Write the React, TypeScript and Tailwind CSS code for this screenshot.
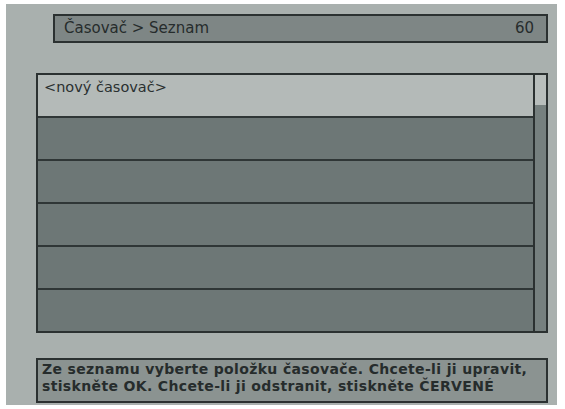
const rows = ['<nový časovač>', '', '', '', '', ''];

export default function App() {
  return (
    <div className="w-[565px] h-[409px] bg-white pt-[4px] pl-[6px] pr-[8px] pb-[4px]" style={{ fontFamily: '"DejaVu Sans", Verdana, sans-serif' }}>
      <div className="h-full bg-[#a9b0ae] pt-[10px] pl-[30px] pr-[9px] flex flex-col">
        {/* title bar */}
        <div className="ml-[17px] h-[29px] border-2 border-[#2b3131] bg-[#7e8685] flex items-center justify-between pl-[9px] pr-[12px] text-[15px] text-[#262c2c]">
          <span>Časovač &gt; Seznam</span>
          <span>60</span>
        </div>

        {/* list */}
        <div className="mt-[30px] h-[260px] border-2 border-[#2b3131] flex">
          <div className="flex-1 flex flex-col">
            {rows.map((r, i) => (
              <div
                key={i}
                className={`flex-1 flex items-start pl-[6px] pt-[2px] text-[14.5px] text-[#2a3030] ${i === 0 ? 'bg-[#b4bab8]' : 'bg-[#6d7776] border-t-2 border-[#2f3636]'}`}
              >
                {r}
              </div>
            ))}
          </div>
          <div className="w-[13px] border-l-2 border-[#2b3131] bg-[#76807f] flex flex-col">
            <div className="h-[30px] bg-[#b8bebc]" />
          </div>
        </div>

        {/* help box */}
        <div className="mt-[25px] h-[45px] border-2 border-[#2b3131] bg-[#8b9391] px-[4px] pt-[1px] text-[14px] font-bold leading-[17px] tracking-[0.35px] text-[#262c2c]">
          Ze seznamu vyberte položku časovače. Chcete-li ji upravit,
          <br />
          stiskněte OK. Chcete-li ji odstranit, stiskněte ČERVENÉ
        </div>
      </div>
    </div>
  );
}
